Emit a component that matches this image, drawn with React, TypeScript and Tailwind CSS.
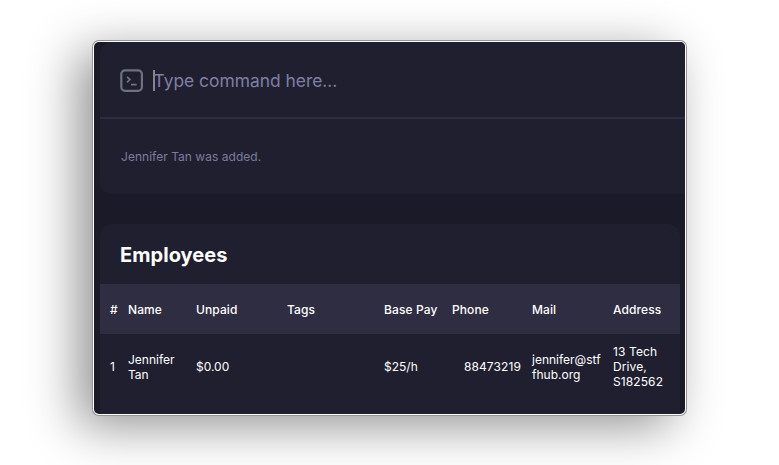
const columns = [
  { label: "#", width: "w-[18px]" },
  { label: "Name", width: "w-[68px]" },
  { label: "Unpaid", width: "w-[91px]" },
  { label: "Tags", width: "w-[97px]" },
  { label: "Base Pay", width: "w-[68px]" },
  { label: "Phone", width: "w-[80px]" },
  { label: "Mail", width: "w-[81px]" },
  { label: "Address", width: "w-[67px]" },
];

function TerminalIcon() {
  return (
    <svg className="mt-px h-6 w-6 shrink-0" viewBox="0 0 24 24" fill="none" stroke="#6b747b">
      <rect x="1.3" y="1.3" width="20.6" height="20.6" rx="3.8" strokeWidth="2.2" />
      <path d="M7 7.8l3 2.8-3 2.8" strokeWidth="1.7" />
      <path d="M11 15.6h5.6" strokeWidth="1.6" />
    </svg>
  );
}

function CommandPanel() {
  return (
    <section className="h-[152px] w-[600px] rounded-xl bg-[#201f30]">
      <div className="flex h-[77px] items-center border-b-2 border-[#2e2c40] pl-5 pt-[2px]">
        <TerminalIcon />
        <div className="ml-[9px] h-[21px] w-[2px] bg-[#85858d]" />
        <span className="-ml-[1.5px] text-[17.4px] leading-[22px] text-[#7e7fa2]">Type command here...</span>
      </div>
      <p className="pl-[21px] pt-[30px] text-[12px] leading-[15px] tracking-[0.03px] text-[#7b7c9d]">Jennifer Tan was added.</p>
    </section>
  );
}

function Employees() {
  return (
    <section className="mt-[30px] h-[260px] w-[580px] rounded-xl bg-[#201f30] text-white">
      <h1 className="flex h-[60px] items-center pl-5 pt-[2px] text-[20px] font-bold leading-6 tracking-[0.05px]">Employees</h1>
      <div className="flex h-[50px] items-center bg-[#2f2d41] pl-[10px] pt-[2px] text-[12px] font-medium tracking-[0.1px]">
        {columns.map((c) => (
          <span key={c.label} className={`${c.width} shrink-0 whitespace-nowrap`}>{c.label}</span>
        ))}
      </div>
      <div className="flex h-[64px] items-center pl-[10px] text-[12px] leading-[15px]">
        <span className="w-[18px] shrink-0">1</span>
        <span className="w-[68px] shrink-0 pr-5 pt-px">Jennifer Tan</span>
        <span className="w-[188px] shrink-0">$0.00</span>
        <span className="w-[68px] shrink-0">$25/h</span>
        <span className="w-[80px] shrink-0 pr-[11px] text-right tracking-[0.1px]">88473219</span>
        <span className="w-[81px] shrink-0 pt-px">jennifer@stf<br />fhub.org</span>
        <span className="w-[67px] shrink-0 tracking-[0.1px]">13 Tech<br />Drive,<br />S182562</span>
      </div>
    </section>
  );
}

export default function App() {
  return (
    <main className="h-[465px] w-[779px] overflow-hidden bg-white pl-[93px] pt-[41px] font-['Inter',sans-serif]">
      <div className="h-[374px] w-[593px] rounded-[6px] border border-white bg-white shadow-[0_0_0_1px_#969494,-15px_11px_50px_0px_rgba(0,0,0,0.43)]">
        <div className="h-[372px] w-[591px] overflow-hidden rounded-[5px] bg-[#1b1a29] pl-[6px]">
          <CommandPanel />
          <Employees />
        </div>
      </div>
    </main>
  );
}
